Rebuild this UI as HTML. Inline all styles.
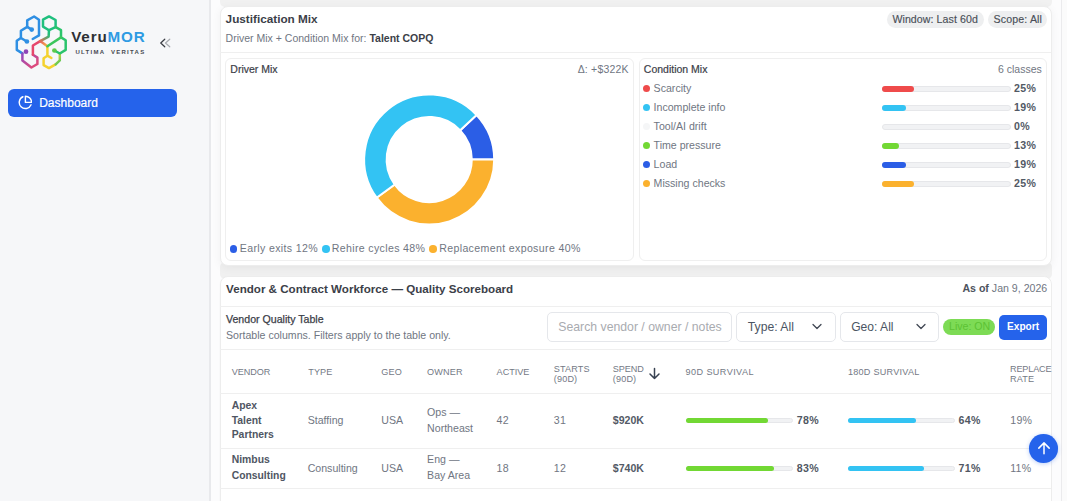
<!DOCTYPE html>
<html><head><meta charset="utf-8"><style>
html,body{margin:0;padding:0;width:1067px;height:501px;overflow:hidden;background:#fafafb;font-family:"Liberation Sans", sans-serif;}
.r{position:absolute;}
.t{position:absolute;white-space:nowrap;font-family:"Liberation Sans", sans-serif;}
</style></head><body>
<div class="r" style="left:0px;top:0px;width:210px;height:501px;background:#f6f7f9;"></div>
<div class="r" style="left:209.3px;top:0px;width:1.4px;height:501px;background:#e8e9ec;"></div>
<div class="r" style="left:210.7px;top:0px;width:851px;height:501px;background:#fcfcfd;"></div>
<div class="r" style="left:1061px;top:0px;width:1px;height:501px;background:#ebebed;"></div>
<div class="r" style="left:1062px;top:0px;width:5px;height:501px;background:#fbfbfb;"></div>
<svg class="r" style="left:0;top:0" width="80" height="80" viewBox="0 0 80 80">
<defs>
<linearGradient id="gm" gradientUnits="userSpaceOnUse" x1="22" y1="53" x2="34" y2="66"><stop offset="0" stop-color="#8f4cc4"/><stop offset="1" stop-color="#dd4a7c"/></linearGradient>
<linearGradient id="go" gradientUnits="userSpaceOnUse" x1="38" y1="42" x2="48" y2="48"><stop offset="0" stop-color="#e9506a"/><stop offset="1" stop-color="#f6c53a"/></linearGradient>
<linearGradient id="gg" gradientUnits="userSpaceOnUse" x1="40" y1="41" x2="49" y2="34"><stop offset="0" stop-color="#e66a55"/><stop offset="1" stop-color="#1fc07a"/></linearGradient>
<linearGradient id="gy" gradientUnits="userSpaceOnUse" x1="55" y1="55" x2="61" y2="62"><stop offset="0" stop-color="#f2d53a"/><stop offset="1" stop-color="#55c857"/></linearGradient>
</defs>
<g fill="none" stroke-width="2.5" stroke-linejoin="round" stroke-linecap="round">
<path d="M32.7,39 L39,35.4 L39,19.7 L34.1,16.5 L27.2,20.3 L27.2,26.9 L20.9,30.8 L20.9,38 L16.8,40.8 L16.8,49.9 L22.4,53.4" stroke="#2f8fe3"/>
<path d="M27.2,26.9 L31.7,29.6 M20.9,38 L26.9,41.5" stroke="#2f8fe3"/>
<path d="M22.4,53.4 L22.4,60.4 L31.4,67.5 L37.4,64 L37.4,57.6 L32.9,54.7" stroke="url(#gm)"/>
<path d="M32.9,54.7 L32.9,45.5 L40.2,41.1" stroke="#e6476c"/>
<path d="M40.2,41.1 L47.4,46.2" stroke="url(#go)"/>
<path d="M47.4,46.2 L47.4,55.7 M51.4,58 L47.4,55.7 L43.6,58.2 L43.6,65.1 L49,68.1 L55.6,64.4" stroke="#f4d22f"/>
<path d="M55.6,64.4 L59.8,60.4 L59.8,53.5" stroke="url(#gy)"/>
<path d="M40.2,41.1 L48.6,36.6 L49,30.2" stroke="url(#gg)"/>
<path d="M49,16.4 L55.6,20 L55.6,27.2 L49,30.2 L43,26.6 L43,19.7 Z" stroke="#1fbf7e"/>
<path d="M55.6,27.2 L61,30.2 L61,37.4 L65.7,40.3 L65.7,49.9 L59.8,53.5 L54.4,50.5" stroke="#2ac46c"/>
<path d="M47.4,46.2 L61,37.4" stroke="#3cc65c"/>
</g>
<circle cx="31.7" cy="29.6" r="2.35" fill="#2f8fe3"/>
<circle cx="26.9" cy="41.5" r="2.35" fill="#2f8fe3"/>
<circle cx="26" cy="51.7" r="2.35" fill="#8e45b8"/>
<circle cx="54.4" cy="50.5" r="2.35" fill="#5cc94b"/>
</svg>
<div class="t " style="left:71.2px;top:27.01px;font-size:15.2px;line-height:19px;font-weight:700;color:#374151;letter-spacing:0.85px;"><span style="color:#2d3034">Veru</span><span style="color:#2e9be3">MOR</span></div>
<div class="t " style="left:75.5px;top:48.01px;font-size:6px;line-height:8px;font-weight:700;color:#464a50;letter-spacing:1.28px;">ULTIMA<span style="display:inline-block;width:5.5px"></span>VERITAS</div>
<svg class="r" style="left:158px;top:37px" width="14" height="12" viewBox="0 0 14 12"><path d="M6.75,2.25 L2.75,6 L6.75,9.75" fill="none" stroke="#3a3d44" stroke-width="1.25" stroke-linecap="round" stroke-linejoin="round"/><path d="M11.75,2.25 L7.5,6 L11.75,9.75" fill="none" stroke="#a6a9ae" stroke-width="1.2" stroke-linecap="round" stroke-linejoin="round"/></svg>
<div class="r" style="left:8.2px;top:88.6px;width:168.5px;height:28px;background:#2563eb;border-radius:6px;"></div>
<svg class="r" style="left:17.6px;top:95.1px" width="14.8" height="14.8" viewBox="0 0 24 24"><path d="M21.21 15.89A10 10 0 1 1 8 2.83" fill="none" stroke="#fff" stroke-width="2.3" stroke-linecap="round" stroke-linejoin="round"/><path d="M22 12A10 10 0 0 0 12 2v10z" fill="none" stroke="#fff" stroke-width="2.3" stroke-linecap="round" stroke-linejoin="round"/></svg>
<div class="t " style="left:39.2px;top:96.00px;font-size:12px;line-height:15px;font-weight:400;color:#ffffff;letter-spacing:0px;-webkit-text-stroke:0.2px #fff;">Dashboard</div>
<div class="r" style="left:220px;top:-12px;width:832px;height:19px;background:#f1f1f1;border-radius:5px;filter:blur(0.7px);"></div>
<div class="r" style="left:220px;top:262px;width:832px;height:17px;background:#f0f0f0;border-radius:5px;filter:blur(0.7px);"></div>
<div class="r" style="left:219.5px;top:6px;width:832.5px;height:260px;background:#fff;border:1px solid #ededed;border-radius:8px;box-shadow:0 2px 10px rgba(0,0,0,0.05);box-sizing:border-box;"></div>
<div class="t " style="left:225.6px;top:11.00px;font-size:11.75px;line-height:15px;font-weight:700;color:#3b4048;letter-spacing:0px;">Justification Mix</div>
<div class="t " style="left:225.6px;top:32.01px;font-size:10.5px;line-height:13px;font-weight:400;color:#707682;letter-spacing:0px;">Driver Mix + Condition Mix for: <b style="color:#3b4048">Talent COPQ</b></div>
<div class="r" style="left:886.8px;top:11.2px;width:97px;height:16.5px;background:#eeeff0;border-radius:9px;"></div>
<div class="t " style="left:892.4px;top:13.00px;font-size:10.6px;line-height:13px;font-weight:400;color:#4a4f58;letter-spacing:0.08px;-webkit-text-stroke:0.15px #4a4f58;">Window: Last 60d</div>
<div class="r" style="left:988px;top:11.2px;width:58.5px;height:16.5px;background:#eeeff0;border-radius:9px;"></div>
<div class="t " style="left:993.5px;top:13.00px;font-size:10.6px;line-height:13px;font-weight:400;color:#4a4f58;letter-spacing:0.15px;-webkit-text-stroke:0.15px #4a4f58;">Scope: All</div>
<div class="r" style="left:220px;top:52px;width:831px;height:1px;background:#efefef;"></div>
<div class="r" style="left:225px;top:57.5px;width:409px;height:203px;border:1px solid #efefef;border-radius:6px;box-sizing:border-box;"></div>
<div class="r" style="left:639px;top:57.5px;width:407.5px;height:203px;border:1px solid #efefef;border-radius:6px;box-sizing:border-box;"></div>
<div class="t " style="left:230.3px;top:63.01px;font-size:10.5px;line-height:13px;font-weight:400;color:#3b4048;letter-spacing:0px;-webkit-text-stroke:0.2px #3b4048;">Driver Mix</div>
<div class="t " style="right:438.20000000000005px;text-align:right;top:63.01px;font-size:10.5px;line-height:13px;font-weight:400;color:#707682;letter-spacing:0.2px;">Δ: +$322K</div>
<div class="t " style="left:643.8px;top:63.01px;font-size:10.5px;line-height:13px;font-weight:400;color:#3b4048;letter-spacing:0px;-webkit-text-stroke:0.2px #3b4048;">Condition Mix</div>
<div class="t " style="right:25.200000000000045px;text-align:right;top:63.01px;font-size:10.5px;line-height:13px;font-weight:400;color:#707682;letter-spacing:0px;">6 classes</div>
<svg class="r" style="left:0;top:0" width="1067" height="501"><path d="M476.58,115.00 A65,65 0 0 1 494.20,159.50 L471.80,159.50 A42.6,42.6 0 0 0 460.25,130.34 Z" fill="#2b5ee6" stroke="#fff" stroke-width="2" stroke-linejoin="miter"/><path d="M494.20,159.50 A65,65 0 0 1 376.61,197.71 L394.74,184.54 A42.6,42.6 0 0 0 471.80,159.50 Z" fill="#fbb12e" stroke="#fff" stroke-width="2" stroke-linejoin="miter"/><path d="M376.61,197.71 A65,65 0 0 1 476.58,115.00 L460.25,130.34 A42.6,42.6 0 0 0 394.74,184.54 Z" fill="#33c3f3" stroke="#fff" stroke-width="2" stroke-linejoin="miter"/></svg>
<div class="r" style="left:229.75px;top:245.05px;width:7.5px;height:7.5px;background:#2b5ee6;border-radius:50%;"></div>
<div class="t " style="left:239.8px;top:242.01px;font-size:10.6px;line-height:13px;font-weight:400;color:#707682;letter-spacing:0.35px;">Early exits 12%</div>
<div class="r" style="left:322.05px;top:245.05px;width:7.5px;height:7.5px;background:#33c3f3;border-radius:50%;"></div>
<div class="t " style="left:331.7px;top:242.01px;font-size:10.6px;line-height:13px;font-weight:400;color:#707682;letter-spacing:0.35px;">Rehire cycles 48%</div>
<div class="r" style="left:429.05px;top:245.05px;width:7.5px;height:7.5px;background:#fbb12e;border-radius:50%;"></div>
<div class="t " style="left:439.2px;top:242.01px;font-size:10.6px;line-height:13px;font-weight:400;color:#707682;letter-spacing:0.35px;">Replacement exposure 40%</div>
<div class="r" style="left:643.3px;top:85.4px;width:7px;height:7px;background:#ef4b4b;border-radius:50%;"></div>
<div class="t " style="left:653.6px;top:82.00px;font-size:10.6px;line-height:13px;font-weight:400;color:#707682;letter-spacing:0px;">Scarcity</div>
<div class="r" style="left:882px;top:86.10000000000001px;width:128.5px;height:5.6px;background:#f1f2f4;border:1px solid #e6e7ea;border-radius:3px;box-sizing:border-box;"></div>
<div class="r" style="left:882px;top:86.10000000000001px;width:32.125px;height:5.6px;background:#ef4b4b;border-radius:3px;"></div>
<div class="t " style="left:1014px;top:82.00px;font-size:10.6px;line-height:13px;font-weight:700;color:#525965;letter-spacing:0.3px;">25%</div>
<div class="r" style="left:643.3px;top:104.4px;width:7px;height:7px;background:#33c3f3;border-radius:50%;"></div>
<div class="t " style="left:653.6px;top:101.00px;font-size:10.6px;line-height:13px;font-weight:400;color:#707682;letter-spacing:0px;">Incomplete info</div>
<div class="r" style="left:882px;top:105.10000000000001px;width:128.5px;height:5.6px;background:#f1f2f4;border:1px solid #e6e7ea;border-radius:3px;box-sizing:border-box;"></div>
<div class="r" style="left:882px;top:105.10000000000001px;width:24.415px;height:5.6px;background:#33c3f3;border-radius:3px;"></div>
<div class="t " style="left:1014px;top:101.00px;font-size:10.6px;line-height:13px;font-weight:700;color:#525965;letter-spacing:0.3px;">19%</div>
<div class="r" style="left:643.3px;top:123.4px;width:7px;height:7px;background:#f5f6f7;border-radius:50%;"></div>
<div class="t " style="left:653.6px;top:120.00px;font-size:10.6px;line-height:13px;font-weight:400;color:#707682;letter-spacing:0px;">Tool/AI drift</div>
<div class="r" style="left:882px;top:124.10000000000001px;width:128.5px;height:5.6px;background:#f1f2f4;border:1px solid #e6e7ea;border-radius:3px;box-sizing:border-box;"></div>
<div class="t " style="left:1014px;top:120.00px;font-size:10.6px;line-height:13px;font-weight:700;color:#525965;letter-spacing:0.3px;">0%</div>
<div class="r" style="left:643.3px;top:142.4px;width:7px;height:7px;background:#72d834;border-radius:50%;"></div>
<div class="t " style="left:653.6px;top:139.00px;font-size:10.6px;line-height:13px;font-weight:400;color:#707682;letter-spacing:0px;">Time pressure</div>
<div class="r" style="left:882px;top:143.1px;width:128.5px;height:5.6px;background:#f1f2f4;border:1px solid #e6e7ea;border-radius:3px;box-sizing:border-box;"></div>
<div class="r" style="left:882px;top:143.1px;width:16.705px;height:5.6px;background:#72d834;border-radius:3px;"></div>
<div class="t " style="left:1014px;top:139.00px;font-size:10.6px;line-height:13px;font-weight:700;color:#525965;letter-spacing:0.3px;">13%</div>
<div class="r" style="left:643.3px;top:161.4px;width:7px;height:7px;background:#2b5ee6;border-radius:50%;"></div>
<div class="t " style="left:653.6px;top:158.00px;font-size:10.6px;line-height:13px;font-weight:400;color:#707682;letter-spacing:0px;">Load</div>
<div class="r" style="left:882px;top:162.1px;width:128.5px;height:5.6px;background:#f1f2f4;border:1px solid #e6e7ea;border-radius:3px;box-sizing:border-box;"></div>
<div class="r" style="left:882px;top:162.1px;width:24.415px;height:5.6px;background:#2b5ee6;border-radius:3px;"></div>
<div class="t " style="left:1014px;top:158.00px;font-size:10.6px;line-height:13px;font-weight:700;color:#525965;letter-spacing:0.3px;">19%</div>
<div class="r" style="left:643.3px;top:180.4px;width:7px;height:7px;background:#fbb12e;border-radius:50%;"></div>
<div class="t " style="left:653.6px;top:177.00px;font-size:10.6px;line-height:13px;font-weight:400;color:#707682;letter-spacing:0px;">Missing checks</div>
<div class="r" style="left:882px;top:181.1px;width:128.5px;height:5.6px;background:#f1f2f4;border:1px solid #e6e7ea;border-radius:3px;box-sizing:border-box;"></div>
<div class="r" style="left:882px;top:181.1px;width:32.125px;height:5.6px;background:#fbb12e;border-radius:3px;"></div>
<div class="t " style="left:1014px;top:177.00px;font-size:10.6px;line-height:13px;font-weight:700;color:#525965;letter-spacing:0.3px;">25%</div>
<div class="r" style="left:0;top:0;width:1067px;height:501px;clip-path:inset(276px 15px 0 219.5px round 8px 8px 0 0)">
<div class="r" style="left:219.5px;top:276px;width:832.5px;height:260px;background:#fff;border:1px solid #ededed;border-radius:8px;box-shadow:0 2px 10px rgba(0,0,0,0.05);box-sizing:border-box;"></div>
<div class="t " style="left:226.1px;top:282.01px;font-size:11.6px;line-height:14px;font-weight:700;color:#3b4048;letter-spacing:0px;">Vendor &amp; Contract Workforce — Quality Scoreboard</div>
<div class="t " style="right:19.799999999999955px;text-align:right;top:282.01px;font-size:10.6px;line-height:13px;font-weight:400;color:#707682;letter-spacing:0px;"><b style="color:#4d535d">As of</b> Jan 9, 2026</div>
<div class="r" style="left:220px;top:306px;width:831px;height:1px;background:#efefef;"></div>
<div class="t " style="left:226px;top:313.01px;font-size:10.6px;line-height:13px;font-weight:400;color:#3b4048;letter-spacing:0px;-webkit-text-stroke:0.25px #3b4048;">Vendor Quality Table</div>
<div class="t " style="left:226px;top:329.00px;font-size:10.6px;line-height:13px;font-weight:400;color:#707682;letter-spacing:0px;">Sortable columns. Filters apply to the table only.</div>
<div class="r" style="left:547.3px;top:312.3px;width:185px;height:29.7px;border:1px solid #e5e7eb;border-radius:5px;box-sizing:border-box;background:#fff;"></div>
<div class="t " style="left:558.3px;top:320.00px;font-size:12.25px;line-height:15px;font-weight:400;color:#a9abb0;letter-spacing:0px;">Search vendor / owner / notes</div>
<div class="r" style="left:736.4px;top:312.3px;width:99.5px;height:29.7px;border:1px solid #e5e7eb;border-radius:5px;box-sizing:border-box;background:#fff;"></div>
<div class="t " style="left:747.8px;top:320.00px;font-size:12.2px;line-height:15px;font-weight:400;color:#4b5563;letter-spacing:0px;">Type: All</div>
<div class="r" style="left:839.7px;top:312.3px;width:99.7px;height:29.7px;border:1px solid #e5e7eb;border-radius:5px;box-sizing:border-box;background:#fff;"></div>
<div class="t " style="left:851.2px;top:320.00px;font-size:12.1px;line-height:15px;font-weight:400;color:#4b5563;letter-spacing:0px;">Geo: All</div>
<svg class="r" style="left:812.4px;top:323.2px" width="10" height="7" viewBox="0 0 10 7"><path d="M1,1.5 L5,5.5 L9,1.5" fill="none" stroke="#3f4652" stroke-width="1.25" stroke-linecap="round" stroke-linejoin="round"/></svg>
<svg class="r" style="left:916px;top:323.2px" width="10" height="7" viewBox="0 0 10 7"><path d="M1,1.5 L5,5.5 L9,1.5" fill="none" stroke="#3f4652" stroke-width="1.25" stroke-linecap="round" stroke-linejoin="round"/></svg>
<div class="r" style="left:943.3px;top:318.9px;width:51.7px;height:16.6px;background:#7ddb55;border-radius:9px;"></div>
<div class="t " style="left:949px;top:320.00px;font-size:10.6px;line-height:13px;font-weight:400;color:#5cc234;letter-spacing:0px;">Live: ON</div>
<div class="r" style="left:999.3px;top:314.7px;width:47.5px;height:25px;background:#2563eb;border-radius:5px;"></div>
<div class="t " style="left:1007.1px;top:320.00px;font-size:10.1px;line-height:13px;font-weight:700;color:#fff;letter-spacing:0px;">Export</div>
<div class="r" style="left:220px;top:349px;width:831px;height:1px;background:#efefef;"></div>
<div class="t " style="left:231.7px;top:367.01px;font-size:9.1px;line-height:11px;font-weight:400;color:#737985;letter-spacing:-0.05px;">VENDOR</div>
<div class="t " style="left:308.2px;top:367.01px;font-size:9.1px;line-height:11px;font-weight:400;color:#737985;letter-spacing:0.15px;">TYPE</div>
<div class="t " style="left:381.3px;top:367.01px;font-size:9.1px;line-height:11px;font-weight:400;color:#737985;letter-spacing:0.15px;">GEO</div>
<div class="t " style="left:427.1px;top:367.01px;font-size:9.1px;line-height:11px;font-weight:400;color:#737985;letter-spacing:0.15px;">OWNER</div>
<div class="t " style="left:496.6px;top:367.01px;font-size:9.1px;line-height:11px;font-weight:400;color:#737985;letter-spacing:0.0px;">ACTIVE</div>
<div class="t " style="left:685.5px;top:367.01px;font-size:9.1px;line-height:11px;font-weight:400;color:#737985;letter-spacing:0.42px;">90D SURVIVAL</div>
<div class="t " style="left:847.9px;top:367.01px;font-size:9.1px;line-height:11px;font-weight:400;color:#737985;letter-spacing:0.25px;">180D SURVIVAL</div>
<div class="t " style="left:553.8px;top:364.00px;font-size:9.1px;line-height:11px;font-weight:400;color:#737985;letter-spacing:0.15px;">STARTS</div>
<div class="t " style="left:553.8px;top:374.00px;font-size:9.1px;line-height:11px;font-weight:400;color:#737985;letter-spacing:0.15px;">(90D)</div>
<div class="t " style="left:612.8px;top:364.00px;font-size:9.1px;line-height:11px;font-weight:400;color:#737985;letter-spacing:-0.05px;">SPEND</div>
<div class="t " style="left:612.8px;top:374.00px;font-size:9.1px;line-height:11px;font-weight:400;color:#737985;letter-spacing:0.15px;">(90D)</div>
<div class="t " style="left:1010px;top:364.00px;font-size:9.1px;line-height:11px;font-weight:400;color:#737985;letter-spacing:-0.15px;">REPLACE</div>
<div class="t " style="left:1010px;top:374.00px;font-size:9.1px;line-height:11px;font-weight:400;color:#737985;letter-spacing:0.15px;">RATE</div>
<svg class="r" style="left:648px;top:367px" width="13" height="13" viewBox="0 0 13 13"><path d="M6.5,1.5 L6.5,11.5 M2,7 L6.5,11.5 L11,7" fill="none" stroke="#374151" stroke-width="1.5" stroke-linecap="round" stroke-linejoin="round"/></svg>
<div class="r" style="left:220px;top:393px;width:831px;height:1px;background:#efefef;"></div>
<div class="t " style="left:231.7px;top:399.01px;font-size:10.4px;line-height:13px;font-weight:700;color:#4f5663;letter-spacing:0px;">Apex</div>
<div class="t " style="left:231.7px;top:414.01px;font-size:10.4px;line-height:13px;font-weight:700;color:#4f5663;letter-spacing:0px;">Talent</div>
<div class="t " style="left:231.7px;top:428.00px;font-size:10.4px;line-height:13px;font-weight:700;color:#4f5663;letter-spacing:0px;">Partners</div>
<div class="t " style="left:307.7px;top:414.01px;font-size:10.6px;line-height:13px;font-weight:400;color:#707682;letter-spacing:0px;">Staffing</div>
<div class="t " style="left:381.3px;top:414.01px;font-size:10.6px;line-height:13px;font-weight:400;color:#707682;letter-spacing:0px;">USA</div>
<div class="t " style="left:427.1px;top:406.00px;font-size:10.6px;line-height:13px;font-weight:400;color:#707682;letter-spacing:0px;">Ops —</div>
<div class="t " style="left:427.1px;top:422.01px;font-size:10.6px;line-height:13px;font-weight:400;color:#707682;letter-spacing:0px;">Northeast</div>
<div class="t " style="left:496.6px;top:414.01px;font-size:10.6px;line-height:13px;font-weight:400;color:#707682;letter-spacing:0.3px;">42</div>
<div class="t " style="left:553.8px;top:414.01px;font-size:10.6px;line-height:13px;font-weight:400;color:#707682;letter-spacing:0.3px;">31</div>
<div class="t " style="left:612.8px;top:414.01px;font-size:10.6px;line-height:13px;font-weight:700;color:#535a66;letter-spacing:0px;">$920K</div>
<div class="r" style="left:685.9px;top:418.09999999999997px;width:107px;height:5.2px;background:#f1f2f4;border:1px solid #e6e7ea;border-radius:3px;box-sizing:border-box;"></div>
<div class="r" style="left:685.9px;top:418.09999999999997px;width:82.39px;height:5.2px;background:#72d834;border-radius:3px;"></div>
<div class="t " style="left:796.8px;top:414.01px;font-size:10.6px;line-height:13px;font-weight:700;color:#505763;letter-spacing:0.3px;">78%</div>
<div class="r" style="left:847.9px;top:418.09999999999997px;width:107px;height:5.2px;background:#f1f2f4;border:1px solid #e6e7ea;border-radius:3px;box-sizing:border-box;"></div>
<div class="r" style="left:847.9px;top:418.09999999999997px;width:68.05199999999999px;height:5.2px;background:#33c3f3;border-radius:3px;"></div>
<div class="t " style="left:958.5px;top:414.01px;font-size:10.6px;line-height:13px;font-weight:700;color:#505763;letter-spacing:0.3px;">64%</div>
<div class="t " style="left:1010.2px;top:414.01px;font-size:10.6px;line-height:13px;font-weight:400;color:#707682;letter-spacing:0.3px;">19%</div>
<div class="r" style="left:220px;top:448px;width:831px;height:1px;background:#efefef;"></div>
<div class="t " style="left:231.7px;top:453.01px;font-size:10.4px;line-height:13px;font-weight:700;color:#4f5663;letter-spacing:0px;">Nimbus</div>
<div class="t " style="left:231.7px;top:469.00px;font-size:10.35px;line-height:13px;font-weight:700;color:#4f5663;letter-spacing:0px;">Consulting</div>
<div class="t " style="left:307.7px;top:462.01px;font-size:10.6px;line-height:13px;font-weight:400;color:#707682;letter-spacing:0px;">Consulting</div>
<div class="t " style="left:381.3px;top:462.01px;font-size:10.6px;line-height:13px;font-weight:400;color:#707682;letter-spacing:0px;">USA</div>
<div class="t " style="left:427.1px;top:453.00px;font-size:10.6px;line-height:13px;font-weight:400;color:#707682;letter-spacing:0px;">Eng —</div>
<div class="t " style="left:427.1px;top:469.01px;font-size:10.6px;line-height:13px;font-weight:400;color:#707682;letter-spacing:0px;">Bay Area</div>
<div class="t " style="left:496.6px;top:462.01px;font-size:10.6px;line-height:13px;font-weight:400;color:#707682;letter-spacing:0.3px;">18</div>
<div class="t " style="left:553.8px;top:462.01px;font-size:10.6px;line-height:13px;font-weight:400;color:#707682;letter-spacing:0.3px;">12</div>
<div class="t " style="left:612.8px;top:462.01px;font-size:10.6px;line-height:13px;font-weight:700;color:#535a66;letter-spacing:0px;">$740K</div>
<div class="r" style="left:685.9px;top:465.5px;width:107px;height:5.2px;background:#f1f2f4;border:1px solid #e6e7ea;border-radius:3px;box-sizing:border-box;"></div>
<div class="r" style="left:685.9px;top:465.5px;width:88.275px;height:5.2px;background:#72d834;border-radius:3px;"></div>
<div class="t " style="left:796.8px;top:462.01px;font-size:10.6px;line-height:13px;font-weight:700;color:#505763;letter-spacing:0.3px;">83%</div>
<div class="r" style="left:847.9px;top:465.5px;width:107px;height:5.2px;background:#f1f2f4;border:1px solid #e6e7ea;border-radius:3px;box-sizing:border-box;"></div>
<div class="r" style="left:847.9px;top:465.5px;width:75.97px;height:5.2px;background:#33c3f3;border-radius:3px;"></div>
<div class="t " style="left:958.5px;top:462.01px;font-size:10.6px;line-height:13px;font-weight:700;color:#505763;letter-spacing:0.3px;">71%</div>
<div class="t " style="left:1010.2px;top:462.01px;font-size:10.6px;line-height:13px;font-weight:400;color:#707682;letter-spacing:0.3px;">11%</div>
<div class="r" style="left:220px;top:488px;width:831px;height:1px;background:#efefef;"></div>
</div>
<div class="r" style="left:1029.4px;top:434px;width:28.6px;height:28.6px;background:#2563eb;border-radius:50%;box-shadow:0 1px 4px rgba(37,99,235,0.3);"></div>
<svg class="r" style="left:1036.7px;top:441.2px" width="14" height="14" viewBox="0 0 14 14"><path d="M7,12.8 L7,1.9 M1.8,7.1 L7,1.9 L12.2,7.1" fill="none" stroke="#fff" stroke-width="1.5" stroke-linecap="round" stroke-linejoin="round"/></svg>
</body></html>
